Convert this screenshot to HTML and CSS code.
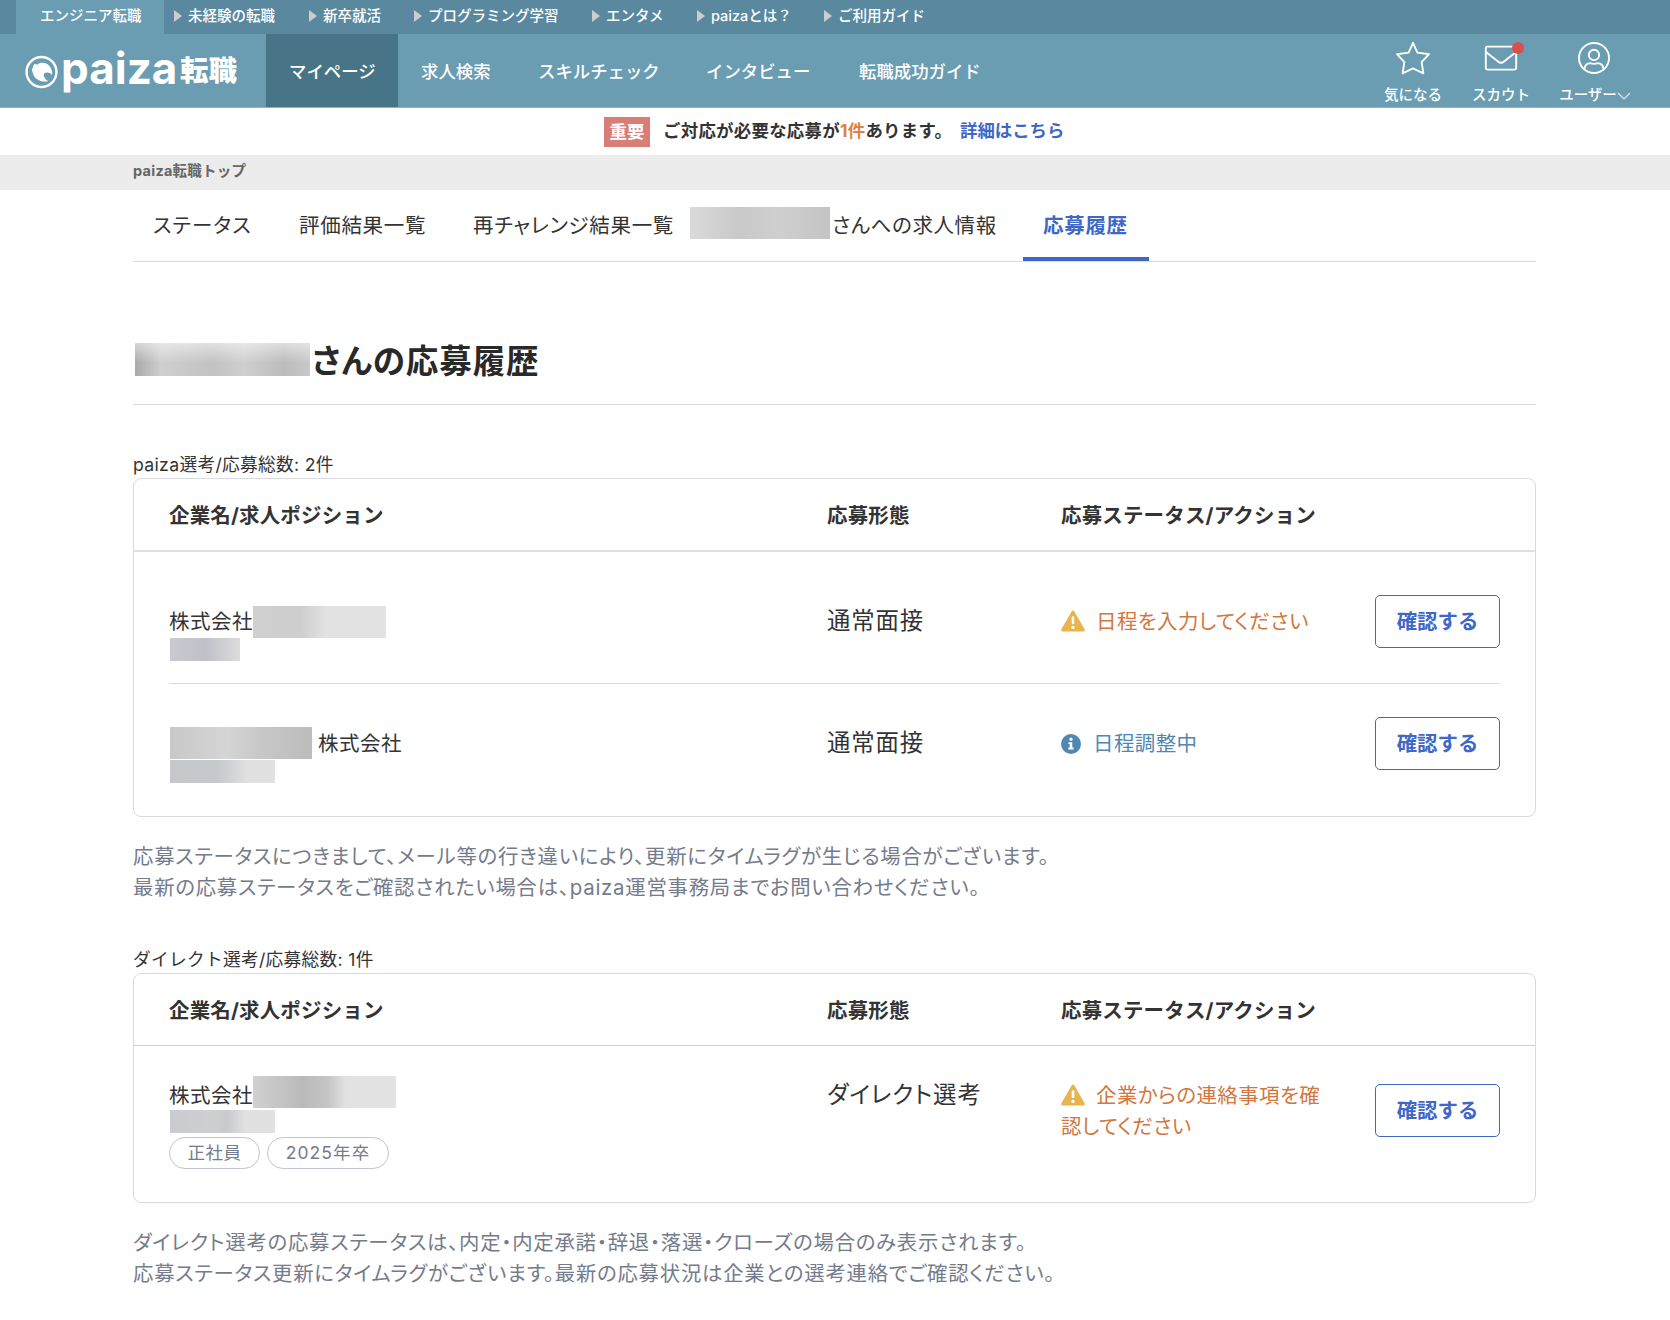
FILE: index.html
```html
<!doctype html>
<html lang="ja">
<head>
    <meta charset="UTF-8">
    <meta name="viewport" content="width=device-width, initial-scale=1.0">
    <link rel="stylesheet" href="styles.css">
    <title>応募履歴 | paiza転職</title>
</head>
<body>
    <nav class="services">
        <a class="service current">エンジニア転職</a>
        <a class="service s1">未経験の転職</a>
        <a class="service s2">新卒就活</a>
        <a class="service s3">プログラミング学習</a>
        <a class="service s4">エンタメ</a>
        <a class="service s5">paizaとは？</a>
        <a class="service s6">ご利用ガイド</a>
    </nav>

    <header class="header">
        <div class="logo">
            <svg class="logo-mark" viewBox="0 0 34 34">
                <circle cx="17" cy="17" r="15.4" fill="none" stroke="#fff" stroke-width="2.5"/>
                <path d="M7 15L9.5 8.5L12.5 9.5C16 6.5 22 7 25 10.5C27.5 13.5 28.3 16.5 28 20C25.5 17.2 22 16.8 19.5 18.5C18.8 21.5 20.5 24.5 24 26.5C16.5 28 9.5 24 8.5 19Z" fill="#fff"/>
            </svg>
            <span class="logo-en">paiza</span>
            <span class="logo-ja">転職</span>
        </div>
        <nav class="menu">
            <a class="menu-item m0 active">マイページ</a>
            <a class="menu-item m1">求人検索</a>
            <a class="menu-item m2">スキルチェック</a>
            <a class="menu-item m3">インタビュー</a>
            <a class="menu-item m4">転職成功ガイド</a>
        </nav>
        <div class="tools">
            <a class="tool">
                <svg class="tool-icon" viewBox="0 0 36 36">
                    <path d="M18 2.8L22.4 12.6L34 14.2L26.6 22.2L28.4 33.4L18 28.4L7.6 33.4L9.4 22.2L2 14.2L13.6 12.6Z"/>
                </svg>
                <span>気になる</span>
            </a>
            <a class="tool">
                <svg class="tool-icon" viewBox="0 0 36 36">
                    <rect x="2.8" y="6.6" width="30.4" height="23" rx="1.5"/>
                    <path d="M3 12L15 21.5Q18 24 21 21.5L33 12"/>
                </svg>
                <i class="dot"></i>
                <span>スカウト</span>
            </a>
            <a class="tool user">
                <svg class="tool-icon" viewBox="0 0 36 36">
                    <circle cx="18" cy="18" r="15"/>
                    <circle cx="18" cy="15" r="5.2"/>
                    <path d="M8.3 29C9 25 11 23.2 14 23.2Q18 24.6 22 23.2C25 23.2 27 25 27.7 29"/>
                </svg>
                <span>ユーザー<svg class="chevron" viewBox="0 0 14 8"><path d="M1 1L7 7L13 1"/></svg></span>
            </a>
        </div>
    </header>

    <div class="alert">
        <span class="badge">重要</span>
        <span class="alert-text">ご対応が必要な応募が<em>1件</em>あります。</span>
        <a class="alert-link">詳細はこちら</a>
    </div>

    <div class="breadcrumb"><span>paiza転職トップ</span></div>

    <main class="main">
        <nav class="tabs">
            <a class="tab t0">ステータス</a>
            <a class="tab t1">評価結果一覧</a>
            <a class="tab t2">再チャレンジ結果一覧</a>
            <a class="tab t3"><i class="mask mask-tab"></i>さんへの求人情報</a>
            <a class="tab active">応募履歴</a>
        </nav>

        <h1 class="title"><i class="mask mask-title"></i>さんの応募履歴</h1>

        <section class="section">
            <p class="count">paiza選考/応募総数: 2件</p>
            <div class="table">
                <div class="row head">
                    <div>企業名/求人ポジション</div>
                    <div>応募形態</div>
                    <div>応募ステータス/アクション</div>
                </div>
                <div class="list">
                    <div class="row first">
                        <div>
                            <div class="company">株式会社<i class="mask mask-a"></i></div>
                            <i class="mask mask-b"></i>
                        </div>
                        <div class="type">通常面接</div>
                        <div class="status warn"><svg class="icon-warn" viewBox="0 0 24 22"><path d="M10.6 1.4Q12 -.6 13.4 1.4L23.5 19Q24.4 21.4 22 21.6H2Q-.4 21.4.5 19Z" fill="#e9b44f"/><path d="M12 7.5V13" stroke="#fff" stroke-width="2.6" stroke-linecap="round"/><circle cx="12" cy="17.4" r="1.7" fill="#fff"/></svg>日程を入力してください</div>
                        <a class="button">確認する</a>
                    </div>
                    <div class="row second">
                        <div>
                            <div class="company"><i class="mask mask-c"></i>株式会社</div>
                            <i class="mask mask-d"></i>
                        </div>
                        <div class="type">通常面接</div>
                        <div class="status info"><svg class="icon-info" viewBox="0 0 20 20"><circle cx="10" cy="10" r="10" fill="#4f87b2"/><circle cx="10" cy="5.2" r="1.6" fill="#fff"/><path d="M7.4 8.2H11.3V13.6H12.6V15.5H7.4V13.6H8.7V10.1H7.4Z" fill="#fff"/></svg>日程調整中</div>
                        <a class="button">確認する</a>
                    </div>
                </div>
            </div>
            <p class="note">応募ステータスにつきまして、メール等の行き違いにより、更新にタイムラグが生じる場合がございます。<br>最新の応募ステータスをご確認されたい場合は、paiza運営事務局までお問い合わせください。</p>
        </section>

        <section class="section">
            <p class="count">ダイレクト選考/応募総数: 1件</p>
            <div class="table">
                <div class="row head thin">
                    <div>企業名/求人ポジション</div>
                    <div>応募形態</div>
                    <div>応募ステータス/アクション</div>
                </div>
                <div class="list">
                    <div class="row direct">
                        <div>
                            <div class="company">株式会社<i class="mask mask-e"></i></div>
                            <i class="mask mask-f"></i>
                            <div class="tags"><span class="tag">正社員</span><span class="tag year">2025年卒</span></div>
                        </div>
                        <div class="type">ダイレクト選考</div>
                        <div class="status warn"><svg class="icon-warn" viewBox="0 0 24 22"><path d="M10.6 1.4Q12 -.6 13.4 1.4L23.5 19Q24.4 21.4 22 21.6H2Q-.4 21.4.5 19Z" fill="#e9b44f"/><path d="M12 7.5V13" stroke="#fff" stroke-width="2.6" stroke-linecap="round"/><circle cx="12" cy="17.4" r="1.7" fill="#fff"/></svg>企業からの連絡事項を確<br>認してください</div>
                        <a class="button">確認する</a>
                    </div>
                </div>
            </div>
            <p class="note">ダイレクト選考の応募ステータスは、内定・内定承諾・辞退・落選・クローズの場合のみ表示されます。<br>応募ステータス更新にタイムラグがございます。最新の応募状況は企業との選考連絡でご確認ください。</p>
        </section>
    </main>
</body>
</html>
```

FILE: styles.css
```css
* {
    box-sizing: border-box;
}

body {
    margin: 0;
    height: 1320px;
    overflow: hidden;
    background: #fff;
    color: #333;
    font-family: Inter, "Noto Sans CJK JP", sans-serif;
    white-space: nowrap;
}

.services {
    display: flex;
    height: 34px;
    padding-left: 16px;
    background: #5a899f;
    color: #fff;
    font-size: 14.5px;
    font-weight: 500;
    line-height: 31px;
}

.service {
    display: flex;
    align-items: center;
    height: 31px;
}

.service:not(.current)::before {
    content: "";
    margin-right: 6px;
    border-left: 8px solid #ccc;
    border-top: 6px solid transparent;
    border-bottom: 6px solid transparent;
}

.service.current {
    width: 148px;
    height: 34px;
    padding: 0 0 3px 24px;
    margin-right: 10px;
    background: #6a9cb2;
}

.s1 {
    width: 135px;
}

.s2 {
    width: 105px;
}

.s3 {
    width: 178px;
}

.s4 {
    width: 105px;
}

.s5 {
    width: 127px;
}

.header {
    display: flex;
    height: 74px;
    background: #6a9cb2;
    border-bottom: 1px solid #8db4c5;
    color: #fff;
}

.logo {
    display: flex;
    align-items: center;
    width: 266px;
    padding-left: 25px;
}

.logo-mark {
    width: 33px;
    height: 34px;
    margin-right: 3px;
    margin-top: 2px;
}

.logo-en {
    width: 119px;
    margin-top: -5px;
    font-size: 44px;
    font-weight: 700;
    line-height: 60px;
}

.logo-ja {
    font-size: 28.5px;
    font-weight: 900;
    line-height: 60px;
}

.menu {
    display: flex;
    flex: 1;
    font-size: 17.4px;
    font-weight: 500;
    line-height: 75px;
}

.menu-item {
    padding-left: 23px;
}

.menu-item.active {
    background: #477487;
}

.m0 {
    width: 132px;
}

.m1 {
    width: 117px;
}

.m2 {
    width: 168px;
}

.m3 {
    width: 153px;
}

.tools {
    display: flex;
    padding-right: 25px;
    font-size: 14.5px;
    font-weight: 500;
}

.tool {
    position: relative;
    display: flex;
    flex-direction: column;
    align-items: center;
    width: 88px;
    padding-top: 6px;
    line-height: 21px;
}

.tool.user {
    width: 100px;
}

.tool-icon {
    width: 36px;
    height: 36px;
    margin-bottom: 8px;
    fill: none;
    stroke: #fff;
    stroke-width: 1.9;
    stroke-linejoin: round;
}

.tool.user .tool-icon {
    margin-right: 2px;
}

.dot {
    position: absolute;
    top: 8px;
    left: 55px;
    width: 12px;
    height: 12px;
    border-radius: 50%;
    background: #d94f4d;
}

.chevron {
    width: 14px;
    height: 8px;
    fill: none;
    stroke: #dce9ee;
    stroke-width: 1.1;
}

.alert {
    display: flex;
    align-items: center;
    height: 47px;
    padding-left: 604px;
    font-size: 17.4px;
    font-weight: 700;
    line-height: 29px;
}

.badge {
    width: 46px;
    height: 30px;
    margin-right: 13px;
    background: #d97d77;
    color: #fff;
    text-align: center;
}

.alert-text {
    width: 297px;
    margin-top: -2px;
    letter-spacing: .3px;
}

.alert-text em {
    color: #df8142;
    font-style: normal;
}

.alert-link {
    margin-top: -2px;
    color: #3e67c8;
}

.breadcrumb {
    height: 35px;
    padding-left: 133px;
    background: #ececec;
    color: #666;
    font-size: 14.5px;
    font-weight: 700;
    letter-spacing: .25px;
    line-height: 32px;
}

.main {
    width: 1403px;
    margin-left: 133px;
}

.tabs,
.title,
.list,
.note {
    font-feature-settings: "palt";
}

.tabs {
    display: flex;
    height: 72px;
    border-bottom: 1px solid #d9dade;
    font-size: 20.5px;
    letter-spacing: .7px;
    line-height: 72px;
}

.tab {
    display: flex;
}

.t0 {
    width: 166px;
    padding-left: 20px;
    letter-spacing: 1px;
}

.t1 {
    width: 174px;
}

.t2 {
    width: 217px;
}

.t3 {
    width: 333px;
    letter-spacing: .6px;
}

.tab.active {
    width: 126px;
    height: 71px;
    padding-left: 20px;
    border-bottom: 4px solid #3e67c8;
    color: #3e67c8;
    font-weight: 700;
}

.mask {
    display: block;
    background: #e2e2e2;
}

.mask-tab {
    width: 140px;
    height: 32px;
    margin: 17px 2px 0 0;
    background: linear-gradient(90deg, #dadada, #c9c9c9 35%, #cfcfcf 65%, #c4c4c4);
}

.title {
    display: flex;
    height: 143px;
    margin: 0;
    padding: 70px 0 0 2px;
    border-bottom: 1px solid #d9dade;
    font-size: 32.5px;
    letter-spacing: .9px;
    line-height: 59px;
    color: #292929;
}

.mask-title {
    width: 175px;
    height: 33px;
    margin: 11px 2px 0 0;
    background:
        linear-gradient(rgba(255, 255, 255, .5), transparent 60%),
        linear-gradient(90deg, #a9a9a9, #cfcfcf 15%, #c2c2c2 45%, #cfcfcf 62%, #bcbcbc 85%, #c8c8c8);
}

.count {
    margin: 0;
    padding-top: 47px;
    height: 73px;
    font-size: 17.7px;
    letter-spacing: .3px;
    line-height: 26px;
}

.table {
    border: 1px solid #d9dade;
    border-radius: 8px;
}

.row {
    display: grid;
    grid-template-columns: 658px 234px 314px 125px;
}

.head {
    height: 73px;
    padding-left: 35px;
    border-bottom: 2px solid #dfe0e2;
    font-size: 20.5px;
    font-weight: 700;
    letter-spacing: .15px;
    line-height: 73px;
}

.head.thin {
    height: 72px;
    border-bottom: 1px solid #d0d2d4;
}

.list {
    padding: 0 35px;
}

.first {
    height: 132px;
    padding-top: 43px;
    border-bottom: 1px solid #d9dade;
}

.second {
    height: 132px;
    padding-top: 33px;
}

.company {
    display: flex;
    height: 43px;
    padding-top: 11px;
    font-size: 20.5px;
    letter-spacing: .5px;
    line-height: 32px;
}

.mask-a {
    width: 133px;
    height: 32px;
    background: linear-gradient(90deg, #d0d0d0, #cecece 35%, #e2e2e2 55%);
}

.mask-b {
    width: 70px;
    height: 23px;
    margin-left: 1px;
    background: linear-gradient(90deg, #c9cbd1, #c0c1c8 50%, #dcdcdc);
}

.mask-c {
    width: 142px;
    height: 32px;
    margin: -1px 6px 0 1px;
    background: linear-gradient(90deg, #c8c8c8, #d5d5d5 40%, #c7c7c7 65%, #bcbcbc);
}

.mask-d {
    width: 105px;
    height: 23px;
    margin-left: 1px;
    background: linear-gradient(90deg, #c5c7cb, #c6c8cd 45%, #e1e1e1 75%);
}

.type {
    font-size: 23.4px;
    letter-spacing: .9px;
    line-height: 52px;
}

.status {
    padding-top: 11px;
    font-size: 20.5px;
    letter-spacing: .4px;
    line-height: 31px;
}

.warn {
    color: #d17740;
}

.info {
    color: #4f87b2;
}

.icon-warn {
    width: 24px;
    height: 22px;
    margin-right: 11px;
    vertical-align: -3px;
}

.icon-info {
    width: 20px;
    height: 20px;
    margin: 0 12px 0 0;
    vertical-align: -3px;
}

.button {
    height: 53px;
    border: 1px solid #3e67c8;
    border-radius: 5px;
    color: #3e67c8;
    font-size: 20.4px;
    font-weight: 700;
    font-feature-settings: normal;
    line-height: 51px;
    text-align: center;
}

.direct {
    height: 156px;
    padding-top: 23px;
}

.mask-e {
    width: 143px;
    height: 32px;
    margin-top: -4px;
    background: linear-gradient(90deg, #d0d0d0, #bababa 35%, #c4c4c4 52%, #e2e2e2 65%);
}

.mask-f {
    width: 105px;
    height: 23px;
    margin-left: 1px;
    background: linear-gradient(90deg, #c9cbce, #cecfd1 40%, #c9cacc 55%, #e1e1e1 72%);
}

.direct .company {
    height: 41px;
}

.direct .button {
    margin-top: 15px;
}

.tags {
    display: flex;
    gap: 7px;
    padding-top: 4px;
}

.tag {
    width: 91px;
    height: 32px;
    border: 1px solid #c3c4cd;
    border-radius: 16px;
    color: #747b8b;
    font-size: 17.5px;
    letter-spacing: .5px;
    line-height: 30px;
    text-align: center;
}

.tag.year {
    width: 122px;
    letter-spacing: 1.1px;
}

.note {
    margin: 0;
    padding-top: 24px;
    height: 83px;
    color: #747b8b;
    font-size: 20.4px;
    letter-spacing: .74px;
    line-height: 31px;
}
```
